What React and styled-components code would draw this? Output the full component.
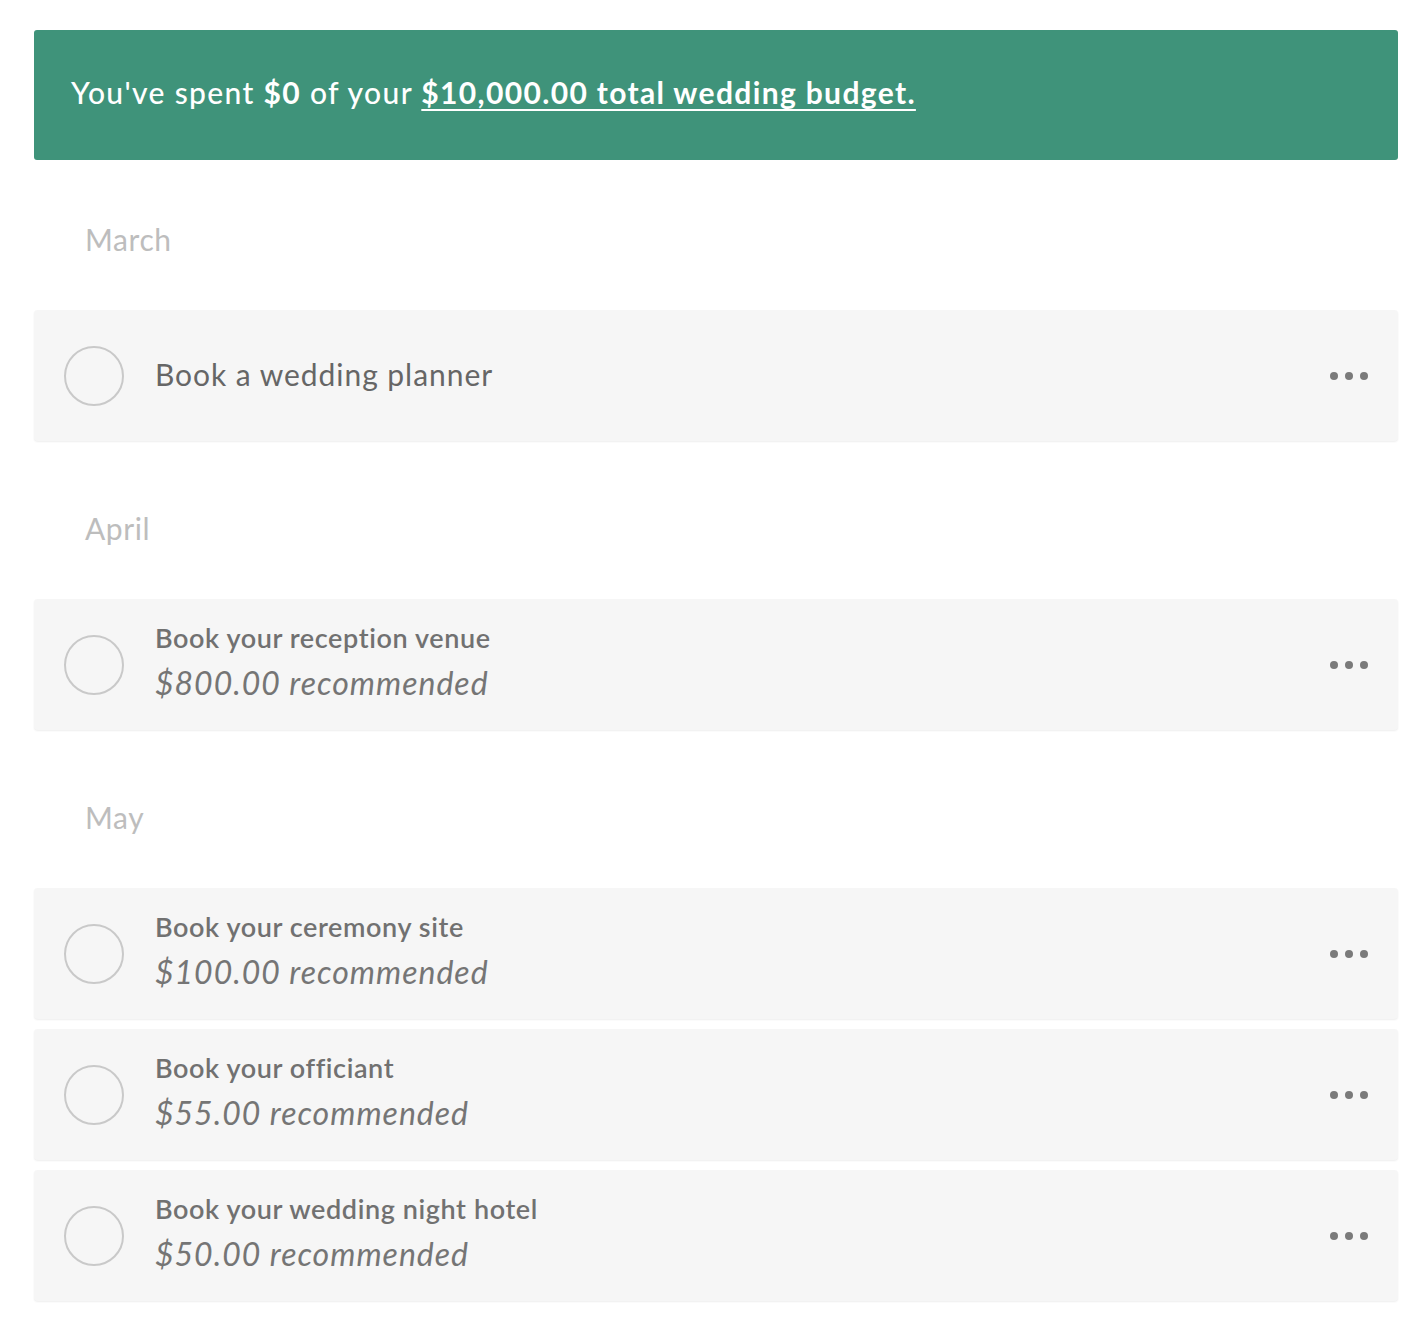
import styled, { createGlobalStyle } from 'styled-components'

const months = [
  {
    name: 'March',
    tasks: [{ id: 1, title: 'Book a wedding planner' }]
  },
  {
    name: 'April',
    tasks: [{ id: 2, title: 'Book your reception venue', amount: '$800.00' }]
  },
  {
    name: 'May',
    tasks: [
      { id: 3, title: 'Book your ceremony site', amount: '$100.00' },
      { id: 4, title: 'Book your officiant', amount: '$55.00' },
      { id: 5, title: 'Book your wedding night hotel', amount: '$50.00' }
    ]
  }
]

const App = () => {
  return (
    <>
      <GlobalStyle />
      <Page>
        <Banner>
          <BannerText>
            You've spent <strong>$0</strong> of your{' '}
            <BudgetLink href="#">$10,000.00 total wedding budget.</BudgetLink>
          </BannerText>
        </Banner>

        {months.map((month) => (
          <Section key={month.name}>
            <MonthLabel>{month.name}</MonthLabel>
            <TaskList>
              {month.tasks.map((task) => (
                <TaskCard key={task.id}>
                  <Check aria-label="Mark complete" />
                  <TaskBody>
                    {task.amount ? (
                      <>
                        <TaskTitle>{task.title}</TaskTitle>
                        <TaskAmount>{task.amount} recommended</TaskAmount>
                      </>
                    ) : (
                      <TaskSingle>{task.title}</TaskSingle>
                    )}
                  </TaskBody>
                  <MoreButton aria-label="More options">
                    <Dot />
                    <Dot />
                    <Dot />
                  </MoreButton>
                </TaskCard>
              ))}
            </TaskList>
          </Section>
        ))}
      </Page>
    </>
  )
}

const GlobalStyle = createGlobalStyle`
  body {
    margin: 0;
    background: #ffffff;
    font-family: Lato, 'Open Sans', sans-serif;
  }
`

const Page = styled.div`
  padding: 30px 28px 36px 34px;
`

const Banner = styled.div`
  height: 130px;
  display: flex;
  align-items: center;
  padding: 0 37px;
  background: #3f937a;
  border-radius: 3px;
  box-sizing: border-box;
`

const BannerText = styled.p`
  margin: 0 0 6px;
  color: #ffffff;
  font-size: 30px;
  font-weight: 500;
  letter-spacing: 1.35px;

  strong {
    font-weight: 700;
  }
`

const BudgetLink = styled.a`
  color: #ffffff;
  font-weight: 700;
  text-decoration: underline;
  text-decoration-thickness: 2px;
  text-underline-offset: 5px;
`

const Section = styled.section`
  & + & {
    margin-top: 8px;
  }
`

const MonthLabel = styled.h2`
  margin: 0;
  padding: 60px 0 52px 51px;
  font-size: 30px;
  line-height: 38px;
  font-weight: 400;
  color: #bdbdbd;
  letter-spacing: 0.6px;
`

const TaskList = styled.div`
  display: flex;
  flex-direction: column;
  gap: 10px;
`

const TaskCard = styled.div`
  height: 131px;
  display: flex;
  align-items: center;
  padding: 0 30px;
  background: #f6f6f6;
  border-radius: 4px;
  box-shadow: 0 1px 2px rgba(0, 0, 0, 0.07);
  box-sizing: border-box;
`

const Check = styled.button`
  width: 60px;
  height: 60px;
  flex-shrink: 0;
  padding: 0;
  border: 2px solid #c9c9c9;
  border-radius: 50%;
  background: transparent;
  cursor: pointer;
`

const TaskBody = styled.div`
  flex: 1;
  display: flex;
  flex-direction: column;
  padding-left: 31px;
`

const TaskSingle = styled.span`
  font-size: 30px;
  color: #666666;
  margin-top: -4px;
  letter-spacing: 0.95px;
`

const TaskTitle = styled.span`
  font-size: 27px;
  line-height: 36px;
  font-weight: 600;
  color: #717171;
  letter-spacing: 0.6px;
`

const TaskAmount = styled.span`
  font-size: 32px;
  line-height: 54px;
  font-style: italic;
  color: #757575;
  letter-spacing: 1px;
`

const MoreButton = styled.button`
  display: flex;
  gap: 7px;
  padding: 0;
  border: none;
  background: transparent;
  cursor: pointer;
`

const Dot = styled.span`
  width: 8px;
  height: 8px;
  border-radius: 50%;
  background: #7a7a7a;
`

export default App
